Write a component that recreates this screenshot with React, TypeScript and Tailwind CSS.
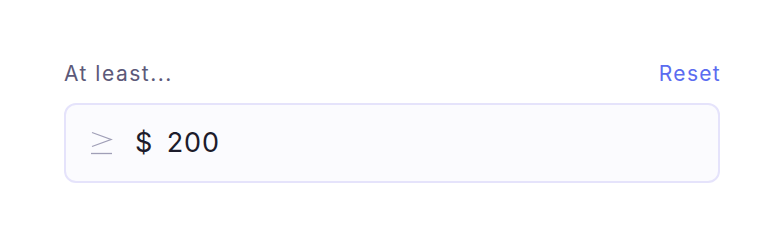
export default function App() {
  return (
    <div className="w-[784px] h-[247px] bg-white px-[64px] pt-[60px]" style={{ fontFamily: "Inter, 'Noto Sans', sans-serif" }}>
      <div className="flex items-end justify-between">
        <span className="text-[21px] leading-[28px] tracking-[1.5px] text-[#5c5979]">At least...</span>
        <button className="text-[21px] leading-[28px] tracking-[1.3px] -mr-[1px] text-[#5b6cf0]">Reset</button>
      </div>
      <div className="mt-[15px] h-[80px] rounded-[12px] border-2 border-[#e5e3fb] bg-[#fbfbfe] flex items-center px-[24px]">
        <svg width="24" height="24" viewBox="0 0 24 24" className="mr-[21px] shrink-0" fill="none" stroke="#a09fb7" strokeWidth="1.3">
          <path d="M2 1.5 L21 8.5 L2 15.5" />
          <path d="M1 22.5 H22" />
        </svg>
        <span className="text-[27px] tracking-[0.5px] text-[#1d1c2b]">$</span>
        <span className="ml-[14px] text-[27px] tracking-[0.8px] text-[#1d1c2b]">200</span>
      </div>
    </div>
  );
}
